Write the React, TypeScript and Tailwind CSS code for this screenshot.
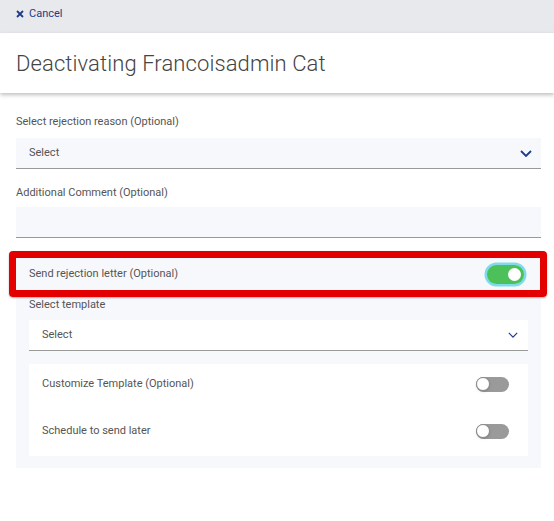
import { useState } from 'react';

function Chevron({ small }: { small?: boolean }) {
  return (
    <svg
      width={small ? 10 : 12}
      height={small ? 6 : 7}
      viewBox="0 0 12 7"
      fill="none"
      stroke="#1e3a8a"
      strokeWidth={small ? 1.4 : 1.8}
    >
      <path d="M1 1l5 5 5-5" />
    </svg>
  );
}

function Toggle({ on, onChange }: { on: boolean; onChange: () => void }) {
  if (on) {
    return (
      <button
        onClick={onChange}
        className="w-[37px] h-[19px] rounded-full bg-[#4cc15a] ring-[2.5px] ring-[#7fdbe8] flex items-center justify-end pr-[3px]"
      >
        <span className="w-[13px] h-[13px] rounded-full bg-white" />
      </button>
    );
  }
  return (
    <button
      onClick={onChange}
      className="w-[33px] h-[15px] rounded-full bg-[#9a9a9a] flex items-center"
    >
      <span className="w-[14px] h-[14px] rounded-full bg-white border border-[#888] shadow-sm" />
    </button>
  );
}

export default function App() {
  const [sendLetter, setSendLetter] = useState(true);
  const [customize, setCustomize] = useState(false);
  const [schedule, setSchedule] = useState(false);

  return (
    <div className="w-[554px] h-[521px] bg-white font-['Roboto',sans-serif] text-[#555]">
      <div className="h-[33px] bg-[#e8e9ed] flex items-center px-4 pb-[5px]">
        <button className="flex items-center gap-[5px] text-[11px] text-[#1e3a8a]">
          <svg width="8" height="8" viewBox="0 0 8 8" stroke="#1e3a8a" strokeWidth="1.8">
            <path d="M1 1l6 6M7 1L1 7" />
          </svg>
          Cancel
        </button>
      </div>

      <header className="h-[60px] bg-white flex items-center px-4 shadow-[0_2px_4px_rgba(0,0,0,0.25)] relative">
        <h1 className="text-[22px] font-light text-[#444] tracking-[0.1px]">
          Deactivating Francoisadmin Cat
        </h1>
      </header>

      <main className="px-4 pt-[21px]">
        <label className="block text-[11px] leading-[16px] mb-[8px]">
          Select rejection reason (Optional)
        </label>
        <div className="h-[31px] w-[525px] bg-[#f7f8fc] border-b border-[#999] flex items-center justify-between pl-[13px] pr-[9px]">
          <span className="text-[11px] text-[#555]">Select</span>
          <Chevron />
        </div>

        <label className="block text-[11px] leading-[16px] mt-[16px] mb-[6px]">
          Additional Comment (Optional)
        </label>
        <div className="h-[31px] w-[525px] bg-[#f7f8fc] border-b border-[#999]" />

        <div className="relative z-10 mt-[13px] -ml-[7px] w-[538px] rounded-[4px] border-[7px] border-[#e30000] shadow-[0_1px_2px_rgba(0,0,0,0.3)]">
          <div className="h-[32px] bg-[#f7f8fc] flex items-center justify-between pl-[13px] pr-[16px]">
            <span className="text-[11px]">Send rejection letter (Optional)</span>
            <Toggle on={sendLetter} onChange={() => setSendLetter(!sendLetter)} />
          </div>
        </div>

        <div className="w-[525px] bg-[#f7f8fc] px-[13px] pt-[1px] pb-[12px]">
          <label className="block text-[11px] leading-[14px] mb-[8px]">Select template</label>
          <div className="h-[31px] bg-white border-b border-[#999] flex items-center justify-between pl-[13px] pr-[10px]">
            <span className="text-[11px]">Select</span>
            <Chevron small />
          </div>

          <div className="mt-[13px] bg-white px-[13px] pt-[10px] pb-[15px] flex flex-col">
            <div className="h-[20px] flex items-center justify-between pr-[6px]">
              <span className="text-[11px]">Customize Template (Optional)</span>
              <Toggle on={customize} onChange={() => setCustomize(!customize)} />
            </div>
            <div className="h-[20px] mt-[27px] flex items-center justify-between pr-[6px]">
              <span className="text-[11px]">Schedule to send later</span>
              <Toggle on={schedule} onChange={() => setSchedule(!schedule)} />
            </div>
          </div>
        </div>
      </main>
    </div>
  );
}
